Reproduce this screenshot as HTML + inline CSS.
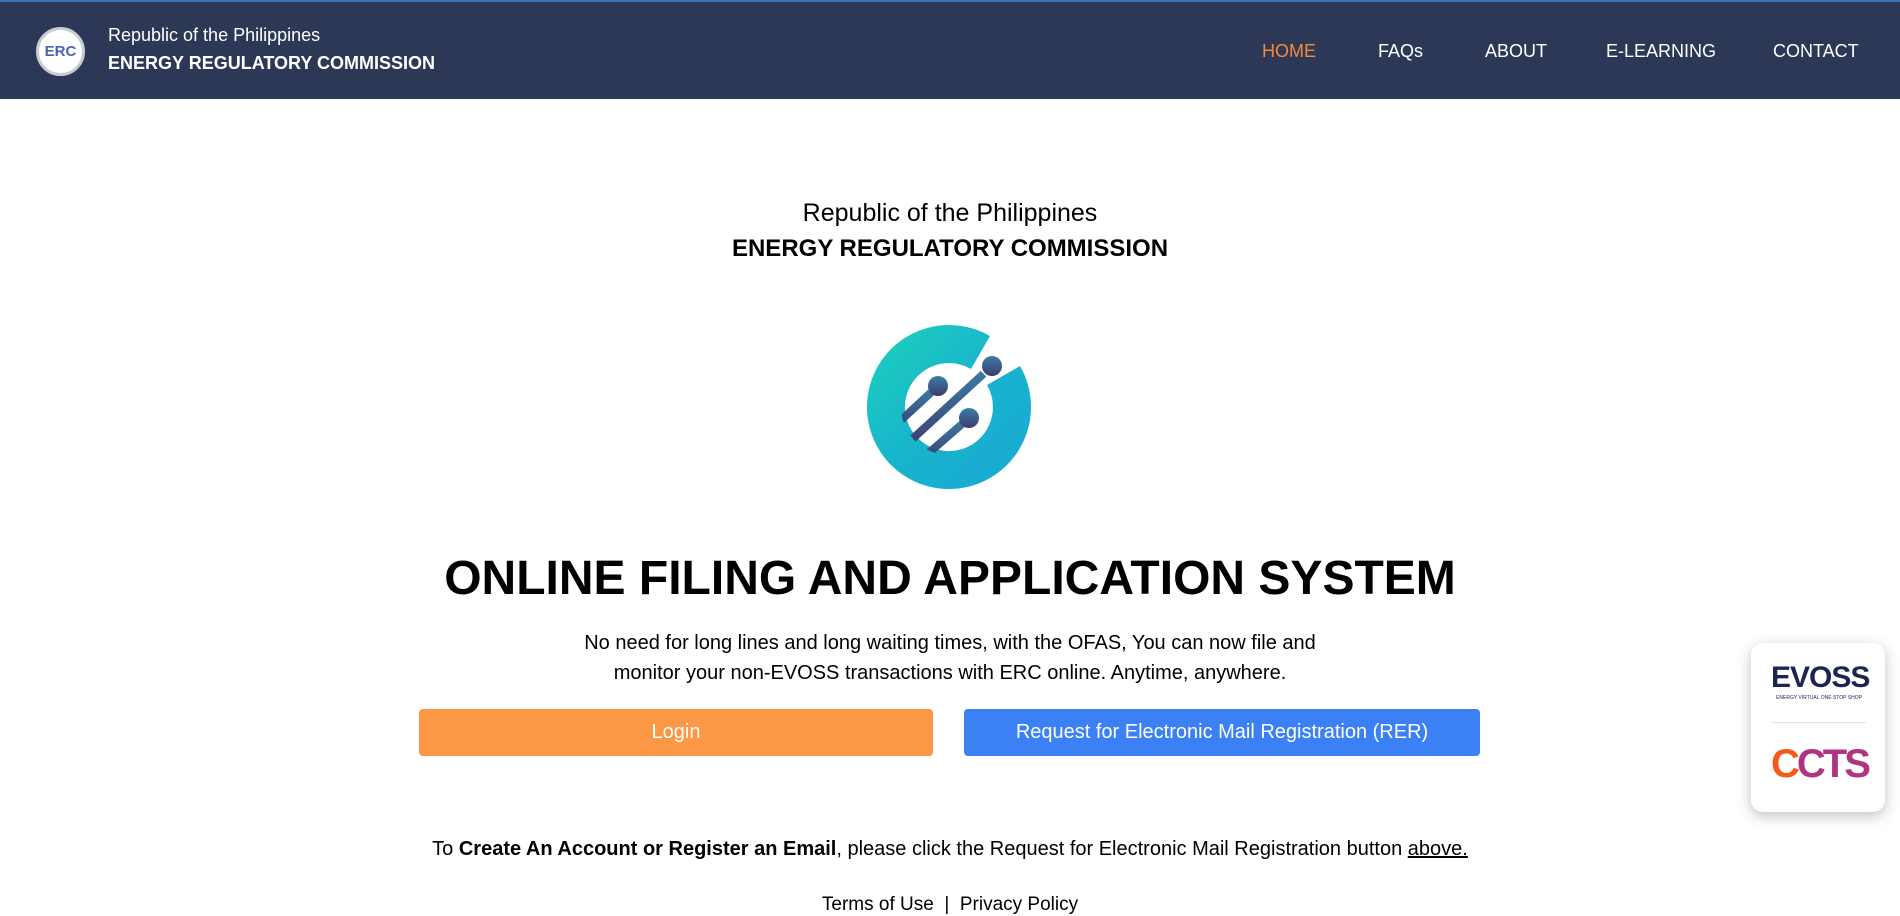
<!DOCTYPE html>
<html><head><meta charset="utf-8"><style>
*{margin:0;padding:0;box-sizing:border-box}
body{width:1900px;height:906px;overflow:hidden;background:#fff;font-family:"Liberation Sans",sans-serif;color:#000;position:relative}
.hdr{position:absolute;left:0;top:0;width:1900px;height:99px;background:#2d3856;border-top:2px solid #3d74b8}
.logo{position:absolute;left:36px;top:25px;width:49px;height:49px;border-radius:50%;background:#fff;border:3px solid #c9ccd4;display:flex;align-items:center;justify-content:center;font:bold 15px "Liberation Sans",sans-serif;color:#4a63b0}
.ht1{position:absolute;left:108px;top:23px;color:#fff;font-size:18px}
.ht2{position:absolute;left:108px;top:51px;color:#fff;font-size:18px;font-weight:bold}
.nav{position:absolute;top:39px;color:#fff;font-size:18px}
.c{position:absolute;left:0;width:1900px;text-align:center}
.btn{position:absolute;top:709px;height:47px;border-radius:4px;color:#fff;font-size:20px;display:flex;align-items:center;justify-content:center}
.card{position:absolute;left:1751px;top:643px;width:134px;height:169px;background:#fff;border-radius:12px;box-shadow:0 4px 14px rgba(0,0,0,.25)}
</style></head><body>
<div class="hdr">
<div class="logo">ERC</div>
<div class="ht1">Republic of the Philippines</div>
<div class="ht2">ENERGY REGULATORY COMMISSION</div>
<div class="nav" style="left:1262px;color:#f58a3c">HOME</div>
<div class="nav" style="left:1378px">FAQs</div>
<div class="nav" style="left:1485px">ABOUT</div>
<div class="nav" style="left:1606px">E-LEARNING</div>
<div class="nav" style="left:1773px">CONTACT</div>
</div>
<div class="c" style="top:199px;font-size:25px">Republic of the Philippines</div>
<div class="c" style="top:235px;font-size:24px;font-weight:bold">ENERGY REGULATORY COMMISSION</div>
<svg style="position:absolute;left:866px;top:324px" width="166" height="166" viewBox="0 0 166 166">
<defs><linearGradient id="g" x1="0" y1="0" x2="1" y2="1"><stop offset="0" stop-color="#1dd3bb"/><stop offset=".5" stop-color="#18b4cc"/><stop offset="1" stop-color="#1aa8d6"/></linearGradient>
<linearGradient id="d" x1="0" y1="0" x2="0" y2="1"><stop offset="0" stop-color="#3a7fa8"/><stop offset="1" stop-color="#3d3a6c"/></linearGradient>
<clipPath id="cp"><circle cx="83" cy="83" r="48"/></clipPath></defs>
<path d="M124 12 A82 82 0 1 0 154 42 L121 61 A44 44 0 1 1 105 45 Z" fill="url(#g)"/>
<g clip-path="url(#cp)" stroke="url(#d)" stroke-width="8" fill="none"><path d="M20 110 L72 62"/><path d="M30 130 L126 42"/><path d="M50 140 L103 94"/></g>
<g fill="url(#d)"><circle cx="72" cy="62" r="10"/><circle cx="126" cy="42" r="10"/><circle cx="103" cy="94" r="10"/></g>
</svg>
<div class="c" style="top:551px;font-size:48px;font-weight:bold">ONLINE FILING AND APPLICATION SYSTEM</div>
<div class="c" style="top:628px;font-size:20px;line-height:30px">No need for long lines and long waiting times, with the OFAS, You can now file and<br>monitor your non-EVOSS transactions with ERC online. Anytime, anywhere.</div>
<div class="btn" style="left:419px;width:514px;background:#fb9745">Login</div>
<div class="btn" style="left:964px;width:516px;background:#3b80f4">Request for Electronic Mail Registration (RER)</div>
<div class="c" style="top:838px;font-size:20px">To <b>Create An Account or Register an Email</b>, please click the Request for Electronic Mail Registration button <u>above.</u></div>
<div class="c" style="top:894px;font-size:19px">Terms of Use &nbsp;|&nbsp; Privacy Policy</div>
<div class="card">
<div style="position:absolute;left:20px;top:18px;width:96px;text-align:center;font:bold 30px 'Liberation Sans',sans-serif;color:#1c2551;letter-spacing:-1px">EVOSS</div>
<div style="position:absolute;left:20px;top:52px;width:96px;text-align:center;font-size:5px;color:#1c2551">ENERGY VIRTUAL ONE STOP SHOP</div>
<div style="position:absolute;left:20px;top:79px;width:95px;height:1px;background:#e4e4e4"></div>
<div style="position:absolute;left:20px;top:99px;font:bold 40px 'Liberation Sans',sans-serif;color:#b03580;letter-spacing:-3px"><span style="color:#f45a1c">C</span>CTS</div>
</div>
</body></html>
